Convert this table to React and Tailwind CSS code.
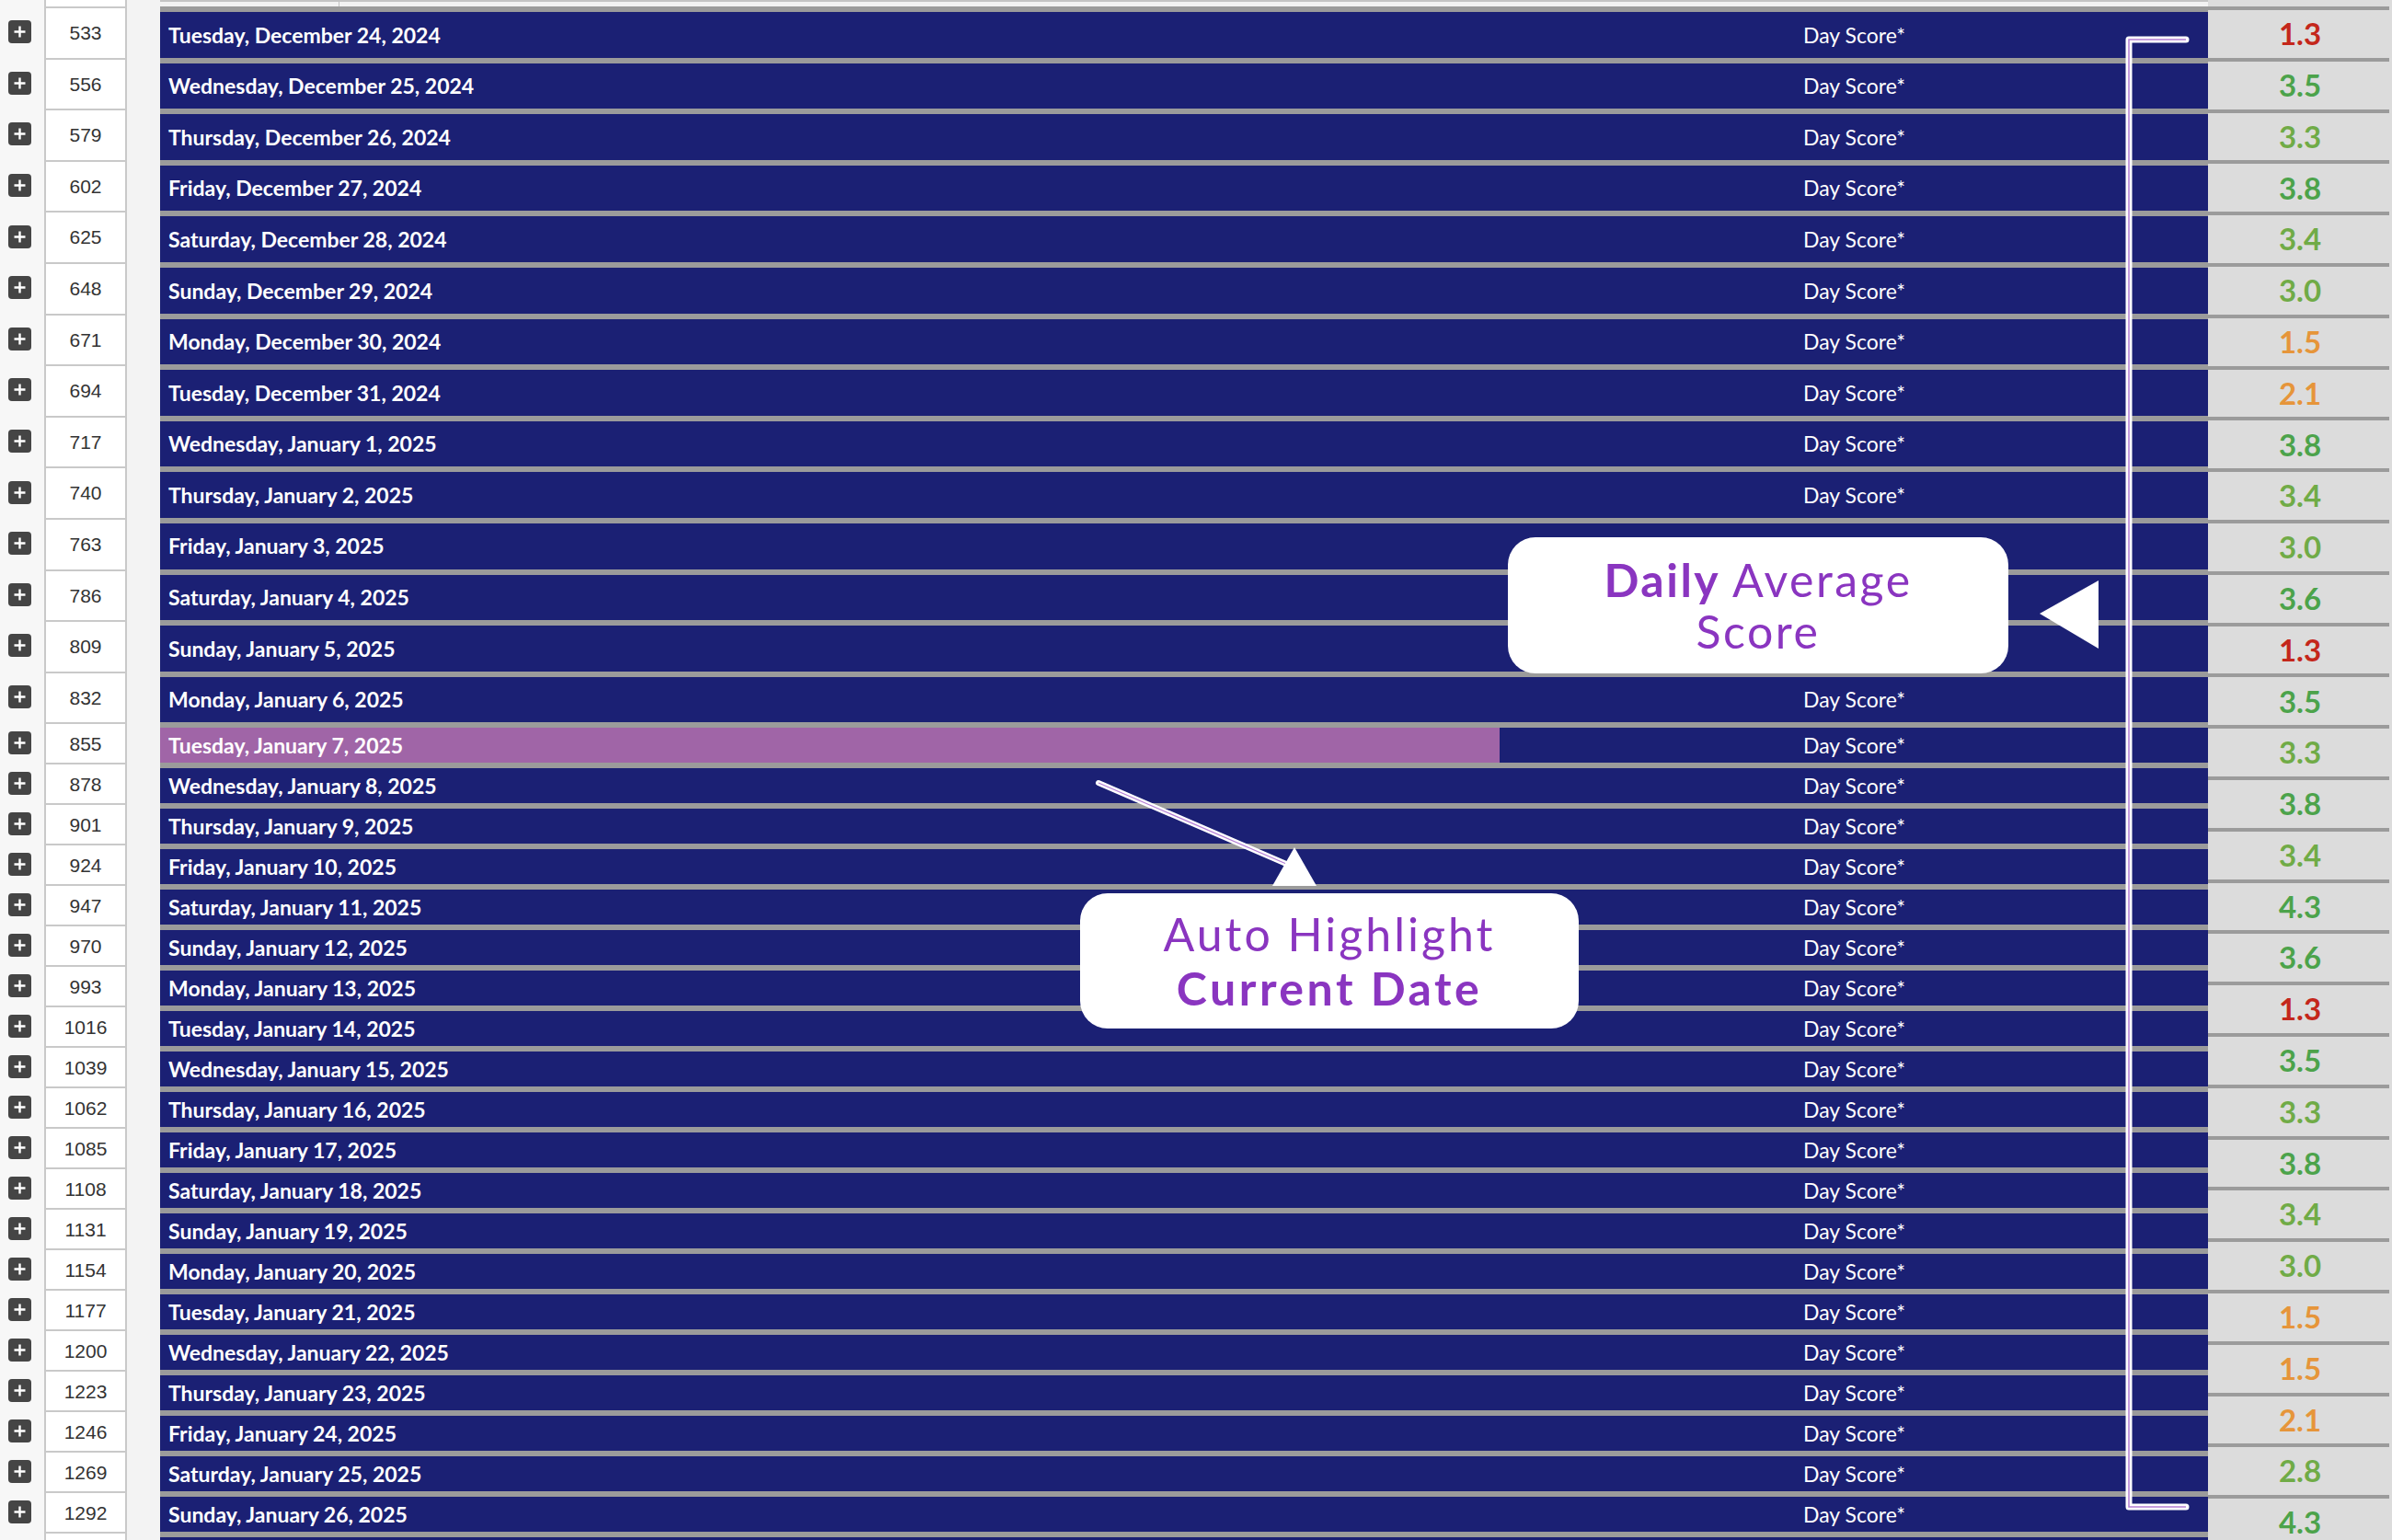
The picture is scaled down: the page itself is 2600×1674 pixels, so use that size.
import React from "react";

const WEEK = ["Sunday", "Monday", "Tuesday", "Wednesday", "Thursday", "Friday", "Saturday"];

const rows = Array.from({ length: 34 }, (_, i) => {
  const dec = i < 8;
  const day = dec ? 24 + i : i - 7;
  return {
    num: 533 + 23 * i,
    label: `${WEEK[(2 + i) % 7]}, ${dec ? "December" : "January"} ${day}, ${dec ? 2024 : 2025}`,
    tall: i < 14,
    today: i === 14,
    // rows sitting under the "Daily Average Score" callout
    hidden: i >= 10 && i <= 12,
  };
});

const scores = [
  1.3, 3.5, 3.3, 3.8, 3.4, 3.0, 1.5, 2.1, 3.8, 3.4, 3.0, 3.6, 1.3, 3.5, 3.3,
  3.8, 3.4, 4.3, 3.6, 1.3, 3.5, 3.3, 3.8, 3.4, 3.0, 1.5, 1.5, 2.1, 2.8, 4.3,
];

function scoreColor(v) {
  if (v < 1.5) return "text-[#c4271b]";
  if (v < 2.5) return "text-[#e6953a]";
  if (v < 3.5) return "text-[#70ab47]";
  return "text-[#4ca34b]";
}

function PlusButton() {
  return (
    <div className="w-[25px] h-[25px] rounded-[4px] bg-[#454545] flex items-center justify-center">
      <svg width="15" height="15" viewBox="0 0 15 15">
        <path d="M7.5 1.5v12M1.5 7.5h12" stroke="#fff" strokeWidth="2.4" />
      </svg>
    </div>
  );
}

function Row({ row }) {
  return (
    <div className={`flex shrink-0 ${row.tall ? "h-[55.6px]" : "h-[44px]"}`}>
      <div className="w-[48px] shrink-0 bg-[#f7f7f7] flex items-center pl-[9px]">
        <PlusButton />
      </div>
      <div className="w-[90px] shrink-0 bg-white border-x-2 border-t-2 border-[#c9c9c9] flex items-center justify-center font-['Liberation_Sans',Arial,sans-serif] text-[21px] text-[#333]">
        {row.num}
      </div>
      <div className="w-[36px] shrink-0 bg-[#f3f3f3]" />
      <div className="flex-1 border-t-[6px] border-[#9b9b9b] bg-[#1b2074] flex items-stretch text-white">
        <div className="w-[1786px] shrink-0 flex items-stretch">
          <div
            className={`flex items-center pl-[9px] font-bold text-[23px] ${
              row.today ? "w-[1456px] bg-[#a065a7]" : ""
            }`}
          >
            {row.label}
          </div>
        </div>
        {!row.hidden && <div className="flex items-center text-[23px]">Day Score*</div>}
      </div>
    </div>
  );
}

export default function App() {
  return (
    <div className="relative w-[2600px] h-[1674px] overflow-hidden bg-white font-['Lato',sans-serif]">
      <div className="flex h-full">
        <div className="w-[2400px] flex flex-col">
          <div className="flex h-[7px] shrink-0">
            <div className="w-[48px] bg-[#f7f7f7]" />
            <div className="w-[90px] bg-white border-x-2 border-[#c9c9c9]" />
            <div className="w-[36px] bg-[#f3f3f3]" />
            <div className="flex-1 flex border-t-[2px] border-[#c4c4c4] bg-[#f2f2f2]">
              <div className="w-[195px] border-r border-[#c4c4c4]" />
            </div>
          </div>
          {rows.map((r) => (
            <Row key={r.num} row={r} />
          ))}
          <div className="flex flex-1">
            <div className="w-[48px] bg-[#f7f7f7]" />
            <div className="w-[90px] bg-white border-x-2 border-t-2 border-[#c9c9c9]" />
            <div className="w-[36px] bg-[#f3f3f3]" />
            <div className="flex-1 border-t-[6px] border-[#9b9b9b] bg-[#1b2074]" />
          </div>
        </div>
        <div className="w-[200px] flex flex-col bg-[#dcdcdc]">
          <div className="h-[7px] shrink-0" />
          {scores.map((s, i) => (
            <div key={i} className="h-[55.8px] shrink-0 flex flex-col">
              <div className="h-[4px] mr-[3px] bg-[#9b9b9b]" />
              <div
                className={`flex-1 flex items-center justify-center font-bold text-[33px] ${scoreColor(s)}`}
              >
                {s.toFixed(1)}
              </div>
            </div>
          ))}
        </div>
      </div>

      <svg className="absolute inset-0 pointer-events-none" width="2600" height="1674">
        <path d="M2376 43 H2314 V1638 H2376" fill="none" stroke="#fff" strokeWidth="7" strokeLinecap="round" strokeLinejoin="round" />
        <path d="M2376 43 H2314 V1638 H2376" fill="none" stroke="#b47ed4" strokeWidth="1.5" />
        <path d="M1194 851 L1398 939" stroke="#fff" strokeWidth="6" strokeLinecap="round" />
        <path d="M1194 851 L1398 939" stroke="#b47ed4" strokeWidth="1.3" />
        <polygon points="1407,921 1383,963 1431,963" fill="#fff" />
        <polygon points="2217,667 2281,631 2281,705" fill="#fff" />
      </svg>

      <div className="absolute left-[1639px] top-[584px] w-[544px] h-[148px] rounded-[30px] bg-white flex items-center justify-center text-center text-[#8a35c0] text-[50px] leading-[56px]">
        <div>
          <span className="font-bold tracking-[0.05em]">Daily</span>{" "}
          <span className="font-normal tracking-[0.05em]">Average</span>
          <br />
          <span className="font-normal tracking-[0.05em]">Score</span>
        </div>
      </div>

      <div className="absolute left-[1174px] top-[971px] w-[542px] h-[147px] rounded-[30px] bg-white flex items-center justify-center text-center text-[#8a35c0] text-[50px] leading-[59px]">
        <div>
          <span className="font-normal tracking-[0.06em]">Auto Highlight</span>
          <br />
          <span className="font-bold tracking-[0.07em]">Current Date</span>
        </div>
      </div>
    </div>
  );
}
